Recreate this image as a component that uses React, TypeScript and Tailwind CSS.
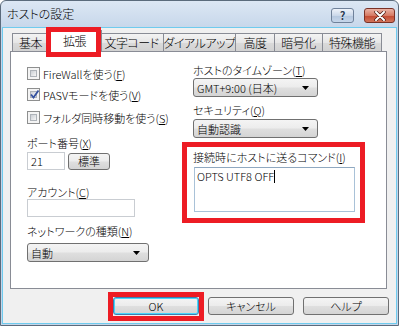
import type { ReactNode } from 'react';

const comboBg =
    'bg-[linear-gradient(#f4f4f4_0%,#ececec_48%,#dfdfdf_52%,#d4d4d4_100%)]';

const Arrow = () => (
    <svg width="7" height="4" viewBox="0 0 7 4" className="ml-auto mr-[8px]">
        <path d="M0 0H7L3.5 4Z" fill="#000" />
    </svg>
);

const Combo = ({ label, className }: { label: string; className: string }) => (
    <div
        className={`flex items-center h-[19px] rounded-[3px] border border-[#707070] pl-[3px] ${comboBg} ${className}`}
    >
        <span className="leading-[14px] whitespace-nowrap">{label}</span>
        <Arrow />
    </div>
);

const CheckRow = ({ checked, children }: { checked?: boolean; children: ReactNode }) => (
    <div className="flex items-center gap-[3px] h-[13px]">
        <div className="relative w-[13px] h-[13px] border border-[#8e8f8f] bg-[#f4f4f4] p-[2px]">
            <div className="w-full h-full border border-[#aeb3b9] bg-[linear-gradient(135deg,#cbcfd5,#f6f6f6)]" />
            {checked && (
                <svg width="11" height="11" viewBox="0 0 11 11" className="absolute left-[1px] top-[0px]">
                    <path d="M2 5.5 L4.5 8.5 L9.5 1.5" fill="none" stroke="#3552a0" strokeWidth="1.8" />
                </svg>
            )}
        </div>
        <span className="leading-[14px] whitespace-nowrap">{children}</span>
    </div>
);

const Label = ({ children, className = '' }: { children: ReactNode; className?: string }) => (
    <div className={`h-[14px] leading-[14px] whitespace-nowrap ${className}`}>{children}</div>
);

const Tab = ({ label, className }: { label: string; className: string }) => (
    <div
        className={`h-[18px] -ml-px border border-b-0 border-[#898c95] bg-[linear-gradient(#f3f3f3,#e6e6e6_50%,#dadada_51%,#d2d2d2)] flex justify-center leading-[17px] whitespace-nowrap ${className}`}
    >
        {label}
    </div>
);

const Button = ({ label, primary }: { label: string; primary?: boolean }) => (
    <div
        className={`w-[86px] h-[18px] rounded-[3px] border text-center leading-[16px] ${comboBg} ${
            primary ? 'border-[#3c7fb1] shadow-[inset_0_0_0_1px_#48d7fb]' : 'border-[#707070]'
        }`}
    >
        {label}
    </div>
);

const App = () => {
    return (
        <div className="relative w-[399px] h-[326px] flex flex-col border border-[#5b6b7c] rounded-t-[6px] bg-[linear-gradient(#dce7f4,#c4d5e9_30px,#c4d5e9)] text-[11px] font-light text-black font-['Noto_Sans_CJK_JP','Noto_Sans',sans-serif] [font-feature-settings:'palt'] overflow-hidden">
            {/* title bar */}
            <div className="h-[26px] flex items-start justify-between pl-[6px] pr-[3px]">
                <span className="mt-[6px] leading-[14px] text-[12px]">ホストの設定</span>
                <div className="flex gap-[10px] mt-[7px]">
                    <div className="w-[23px] h-[15px] rounded-[3px] border border-[#6f819a] bg-[linear-gradient(#eef3fa,#cbd8ea_50%,#b4c7df_51%,#c6d6ea)] flex items-center justify-center">
                        <span className="text-[11px] leading-[11px] font-bold text-[#2b3a55] [text-shadow:0_0_1px_#fff]">?</span>
                    </div>
                    <div className="w-[31px] h-[15px] rounded-[3px] border border-[#7a3126] bg-[linear-gradient(#eab2a4,#d67a64_50%,#c2472f_51%,#d2755b)] flex items-center justify-center">
                        <svg width="12" height="10" viewBox="0 0 12 10">
                            <path d="M2 1L10 9M10 1L2 9" stroke="#4a1a12" strokeWidth="3.4" strokeLinecap="round" />
                            <path d="M2 1L10 9M10 1L2 9" stroke="#fff" strokeWidth="2" strokeLinecap="round" />
                        </svg>
                    </div>
                </div>
            </div>

            {/* client */}
            <div className="flex-1 mx-[1px] mb-[1px] border border-[#6fcbee] bg-[#f0f0f0] pl-[7px] pr-[7px] pt-[2px]">
                <div className="flex items-end h-[21px] pl-[3px] text-[12px] tracking-[-0.5px]">
                    <Tab label="基本" className="w-[37px]" />
                    <div className="relative z-10 w-[55px] h-[22px] -mb-px -mx-[2px] border border-b-0 border-[#898c95] bg-white text-center leading-[20px]">
                        拡張
                    </div>
                    <Tab label="文字コード" className="w-[65px]" />
                    <Tab label="ダイアルアップ" className="w-[73px]" />
                    <Tab label="高度" className="w-[40px]" />
                    <Tab label="暗号化" className="w-[49px]" />
                    <Tab label="特殊機能" className="w-[60px]" />
                </div>

                <div className="h-[238px] w-[377px] border border-[#898c95] bg-white flex pl-[16px]">
                    <div className="w-[166px] flex flex-col">
                        <div className="mt-[15px]">
                            <CheckRow>
                                FireWallを使う(<u>F</u>)
                            </CheckRow>
                        </div>
                        <div className="mt-[8px]">
                            <CheckRow checked>
                                PASVモードを使う(<u>V</u>)
                            </CheckRow>
                        </div>
                        <div className="mt-[10px]">
                            <CheckRow>
                                フォルダ同時移動を使う(<u>S</u>)
                            </CheckRow>
                        </div>
                        <Label className="mt-[12px]">
                            ポート番号(<u>X</u>)
                        </Label>
                        <div className="mt-[2px] flex items-center gap-[3px]">
                            <div className="w-[38px] h-[18px] border border-[#c9cdd2] bg-white pl-[3px] leading-[16px]">21</div>
                            <div className={`w-[42px] h-[17px] rounded-[3px] border border-[#707070] text-center leading-[15px] ${comboBg}`}>
                                標準
                            </div>
                        </div>
                        <Label className="mt-[15px]">
                            アカウント(<u>C</u>)
                        </Label>
                        <div className="w-[108px] h-[18px] border border-[#c9cdd2] bg-white" />
                        <Label className="mt-[7px]">
                            ネットワークの種類(<u>N</u>)
                        </Label>
                        <Combo label="自動" className="mt-[5px] w-[122px]" />
                    </div>

                    <div className="flex-1 flex flex-col">
                        <Label className="mt-[11px]">
                            ホストのタイムゾーン(<u>T</u>)
                        </Label>
                        <Combo label="GMT+9:00 (日本)" className="mt-[1px] w-[125px]" />
                        <Label className="mt-[6px]">
                            セキュリティ(<u>Q</u>)
                        </Label>
                        <Combo label="自動認識" className="mt-[2px] w-[125px]" />
                        <Label className="mt-[12px]">
                            接続時にホストに送るコマンド(<u>I</u>)
                        </Label>
                        <div className="mt-[3px] ml-px w-[161px] h-[45px] border border-[#a9c2d8] border-t-[#8fa8c0] bg-white pl-[2px] pt-[1px] leading-[15px]">
                            OPTS UTF8 OFF<span className="inline-block w-px h-[13px] bg-black align-[-2px]" />
                        </div>
                    </div>
                </div>

                <div className="mt-[8px] flex justify-end gap-[9px]">
                    <Button label="OK" primary />
                    <Button label="キャンセル" />
                    <Button label="ヘルプ" />
                </div>
            </div>

            {/* red annotation boxes */}
            <div className="absolute z-20 left-[45px] top-[26px] w-[55px] h-[30px] border-[5px] border-[#ed1c24]" />
            <div className="absolute z-20 left-[181px] top-[141px] w-[183px] h-[81px] border-[5px] border-[#ed1c24]" />
            <div className="absolute z-20 left-[107px] top-[291px] w-[96px] h-[29px] border-[5px] border-[#ed1c24]" />
        </div>
    );
};

export default App;
